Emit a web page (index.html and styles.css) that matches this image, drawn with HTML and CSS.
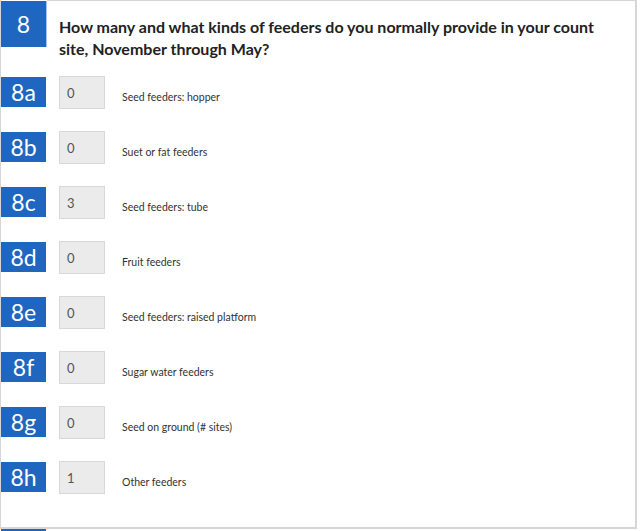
FILE: index.html
```html
<!DOCTYPE html>
<html>
<head>
<meta charset="utf-8">
<link rel="stylesheet" href="styles.css">
</head>
<body>
<div class="panel">
  <div class="q-head">
    <div class="q-num">8</div>
    <div class="q-title">How many and what kinds of feeders do you normally provide in your count site, November through May?</div>
  </div>
  <div class="items">
    <div class="item"><div class="item-num">8a</div><div class="item-input">0</div><div class="item-label">Seed feeders: hopper</div></div>
    <div class="item"><div class="item-num">8b</div><div class="item-input">0</div><div class="item-label">Suet or fat feeders</div></div>
    <div class="item"><div class="item-num">8c</div><div class="item-input">3</div><div class="item-label">Seed feeders: tube</div></div>
    <div class="item"><div class="item-num">8d</div><div class="item-input">0</div><div class="item-label">Fruit feeders</div></div>
    <div class="item"><div class="item-num">8e</div><div class="item-input">0</div><div class="item-label">Seed feeders: raised platform</div></div>
    <div class="item"><div class="item-num">8f</div><div class="item-input">0</div><div class="item-label">Sugar water feeders</div></div>
    <div class="item"><div class="item-num">8g</div><div class="item-input">0</div><div class="item-label">Seed on ground (# sites)</div></div>
    <div class="item"><div class="item-num">8h</div><div class="item-input">1</div><div class="item-label">Other feeders</div></div>
  </div>
</div>
<div class="next-num"></div>
</body>
</html>
```
FILE: styles.css
```css
html, body {
  margin: 0;
  padding: 0;
  background: #ffffff;
  font-family: Lato, "Open Sans", sans-serif;
  overflow: hidden;
}
.panel {
  width: 637px;
  height: 529px;
  box-sizing: border-box;
  border-left: 1px solid #d6d6d6;
  border-right: 2px solid #d6d6d6;
  border-bottom: 2px solid #d6d6d6;
}
.q-head {
  display: flex;
  align-items: flex-start;
}
.q-num {
  width: 45px;
  height: 46px;
  margin-top: 1px;
  background: #1f66c1;
  border-right: 1px solid #a8c3e6;
  color: #ffffff;
  font-size: 23px;
  line-height: 46px;
  text-align: center;
}
.q-title {
  flex: 1;
  border-top: 1px solid #d6d6d6;
  padding: 15px 30px 0 12px;
  font-size: 16px;
  font-weight: bold;
  line-height: 22px;
  color: #222222;
}
.items {
  margin-top: 16px;
}
.item {
  display: flex;
  align-items: flex-start;
  height: 55px;
}
.item-num {
  width: 45px;
  height: 30px;
  margin-top: 1px;
  background: #1f66c1;
  color: #ffffff;
  font-size: 23px;
  line-height: 30px;
  text-align: center;
}
.item-input {
  margin-left: 13px;
  width: 46px;
  height: 33px;
  box-sizing: border-box;
  background: #ebebeb;
  border: 1px solid #d8d8d8;
  padding: 8px 0 0 7px;
  font-size: 13px;
  color: #555555;
}
.item-label {
  margin-left: 17px;
  padding-top: 15px;
  font-size: 10.5px;
  color: #333333;
}
.next-num {
  width: 45px;
  height: 10px;
  margin-left: 1px;
  background: #1f66c1;
}
```
